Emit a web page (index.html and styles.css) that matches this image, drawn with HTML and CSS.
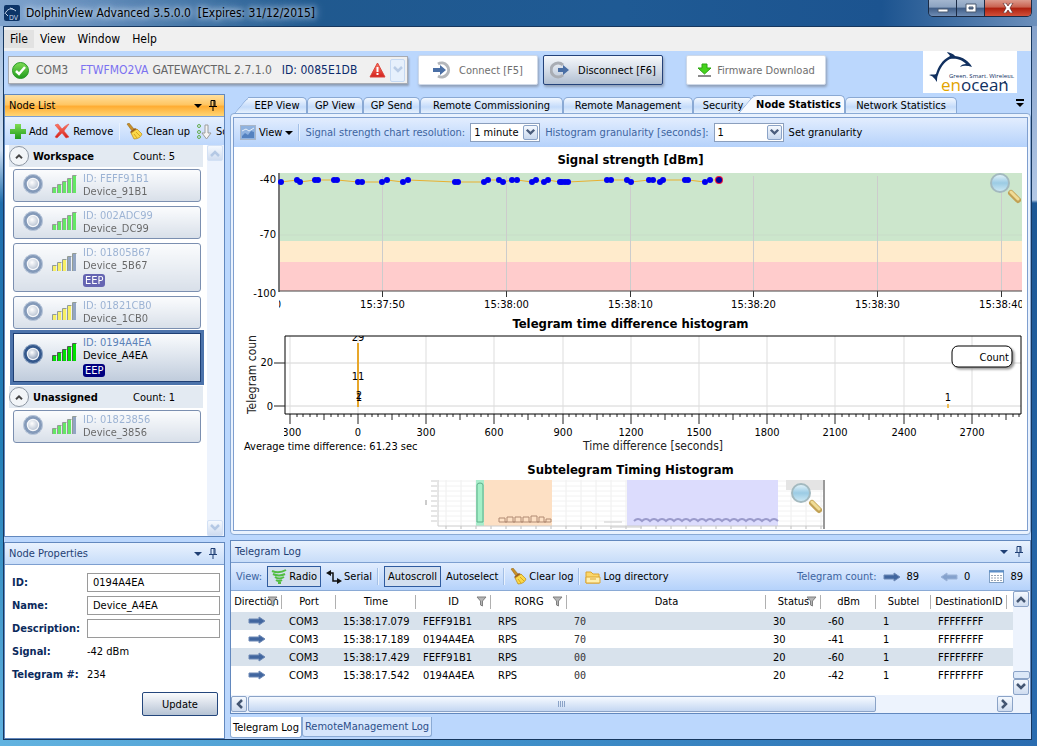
FILE: index.html
```html
<!DOCTYPE html>
<html lang="en">

<head>
    <meta charset="utf-8">
    <title>DolphinView Advanced</title>
    <link rel="stylesheet" href="styles.css">
</head>

<body>
    <!-- shared icons -->
    <svg class="defs" width="0" height="0">
        <defs>
            <linearGradient id="green" x1="0" y1="0" x2="0" y2="1"><stop offset="0" stop-color="#7fdc55"/><stop offset="1" stop-color="#1f9a1c"/></linearGradient>
            <linearGradient id="red" x1="0" y1="0" x2="0" y2="1"><stop offset="0" stop-color="#ff7a66"/><stop offset="1" stop-color="#d3201c"/></linearGradient>
            <linearGradient id="lens" x1="0" y1="0" x2="0" y2="1"><stop offset="0" stop-color="#e6f5fb"/><stop offset=".5" stop-color="#9bcbe4"/><stop offset="1" stop-color="#cfeaf5"/></linearGradient>
            <radialGradient id="ball" cx=".4" cy=".35" r=".7"><stop offset="0" stop-color="#fff"/><stop offset="1" stop-color="#8e9fb8"/></radialGradient>
        </defs>
        <symbol id="pin" viewBox="0 0 8 11"><path d="M2 .5h4v6H2zM5 1v5M0 6.500h8M4 7v4" fill="none" stroke="currentColor"/></symbol>
        <symbol id="arrow" viewBox="0 0 18 10"><path d="M1 3h10V1l6 4-6 4V7H1z" fill="#41669f" stroke="#6d88b5"/></symbol>
        <symbol id="chevron" viewBox="0 0 10 8"><path d="M1 1l4 4 4-4" fill="none" stroke="currentColor" stroke-width="2.500"/></symbol>
        <symbol id="funnel" viewBox="0 0 11 11"><path d="M1 1h9L6.500 5v5l-2-1V5z" fill="#b5b5b5" stroke="#808080"/></symbol>
        <symbol id="broom" viewBox="0 0 17 17"><path d="M1 1l2-1 5 6-2 2z" fill="#c98f28" stroke="#8a6213" stroke-width=".5"/><path d="M4 9l5-4 3 2-5 5z" fill="#9a5a1c"/><path d="M5 10l6-4 5 5c-1 3-4 5-8 5z" fill="#fbd84a" stroke="#b98a17" stroke-width=".7"/><path d="M8 11l3 4M10 9l4 4" stroke="#d7a71f"/></symbol>
        <symbol id="ring" viewBox="0 0 22 22"><circle cx="11" cy="11" r="8" fill="#f2f5f9" stroke="#34588c" stroke-width="3.500"/><circle cx="11" cy="11" r="9.500" fill="none" stroke="#8fa6c6"/><circle cx="11" cy="11" r="5" fill="url(#ball)"/></symbol>
        <symbol id="magnifier" viewBox="0 0 32 32"><path d="M20 20l4 4" stroke="#8d9aa5" stroke-width="3"/><path d="M22 21l7 7" stroke="#c2a255" stroke-width="6" stroke-linecap="round"/><path d="M22 20l7 7" stroke="#f0dc96" stroke-width="3" stroke-linecap="round"/><circle cx="11" cy="11" r="9" fill="url(#lens)" stroke="#a3b9bf" stroke-width="2"/></symbol>
    </svg>

    <header class="titlebar">
        <svg class="app-icon" width="16" height="16" viewBox="0 0 16 16"><rect width="16" height="16" rx="2" fill="#0d3467"/><path d="M1 9c2-5 6-7 11-3M2 9l2 2M6 3l3 1" fill="none" stroke="#c7d8ec"/><text x="5" y="15" class="icon-text">DV</text></svg>
        <h1>DolphinView Advanced 3.5.0.0&nbsp; [Expires: 31/12/2015]</h1>
        <div class="window-buttons">
            <button type="button" aria-label="Minimize"><svg width="12" height="10" viewBox="0 0 12 10"><path d="M1 6h10v3H1z" fill="#fff" stroke="#4a5a70"/></svg></button>
            <button type="button" aria-label="Maximize"><svg width="12" height="10" viewBox="0 0 12 10"><path d="M1 1h10v8H1zM4 4h4v2H4z" fill="#fff" fill-rule="evenodd" stroke="#4a5a70"/></svg></button>
            <button type="button" class="close" aria-label="Close"><svg width="12" height="10" viewBox="0 0 12 10"><path d="M1 0h3l2 3 2-3h3L8 5l3 5H8L6 7l-2 3H1l3-5z" fill="#fff" stroke="#5c2a2a" stroke-width=".7"/></svg></button>
        </div>
    </header>

    <div class="window">
        <nav class="menu">
            <a href="#" class="current">File</a>
            <a href="#">View</a>
            <a href="#">Window</a>
            <a href="#">Help</a>
        </nav>

        <div class="toolbar">
            <div class="gateway">
                <svg width="17" height="17" viewBox="0 0 17 17"><circle cx="8.500" cy="8.500" r="8" fill="url(#green)" stroke="#2b9a2a"/><path d="M4 9l3 3 6-7" fill="none" stroke="#fff" stroke-width="2.500"/></svg>
                <span class="port">COM3</span>
                <span class="serial">FTWFMO2VA</span>
                <span>GATEWAYCTRL 2.7.1.0</span>
                <span class="gateway-id">ID: 0085E1DB</span>
                <svg class="warning" width="17" height="16" viewBox="0 0 17 16"><path d="M8.500 1L16 15H1z" fill="url(#red)" stroke="#d9433a" stroke-linejoin="round"/><path d="M8.500 5v5M8.500 11v2" stroke="#fff" stroke-width="2"/></svg>
                <button type="button" class="gateway-drop" aria-label="Select gateway"><svg width="10" height="8"><use href="#chevron"/></svg></button>
            </div>
            <button type="button" class="tool-button connect" disabled>
                <svg width="18" height="18" viewBox="0 0 18 18"><path d="M5 3a7 7 0 1 1 0 12" fill="none" stroke="#b4b7bb" stroke-width="3"/><path d="M0 7h7V4l6 5-6 5v-3H0z" fill="#4a6fa5"/></svg>
                Connect [F5]
            </button>
            <button type="button" class="tool-button disconnect">
                <svg width="20" height="18" viewBox="0 0 20 18"><path d="M13 4a7 7 0 1 0 0 10" fill="none" stroke="#a9adb4" stroke-width="3"/><path d="M8 7h5V4l6 5-6 5v-3H8z" fill="#4a6fa5"/></svg>
                Disconnect [F6]
            </button>
            <button type="button" class="tool-button firmware" disabled>
                <svg width="15" height="14" viewBox="0 0 15 14"><path d="M5 1h5v4h4l-6.500 6L1 5h4z" fill="#45d31b" stroke="#2ca512"/><path d="M1 13h13" stroke="#8b8b8b" stroke-width="2"/></svg>
                Firmware Download
            </button>
            <svg class="logo" width="94" height="42" viewBox="0 0 94 42" role="img" aria-label="enocean">
                <rect width="94" height="42" fill="#fff"/>
                <path d="M24 1c4 1 7 2 8 4 8 1 14 5 17 11-4-1-8-2-12 0 1-2 3-3 6-3-4-5-11-6-16-5-6 3-10 9-12 16-1 2-1 4-1 7-3-4-4-6-8-7 3-1 5 0 7-1 2-7 6-14 14-18-1-2-2-2-3-4z" fill="#11305f"/>
                <text x="26" y="27" class="logo-line">Green. Smart. Wireless.</text>
                <text x="18" y="40" class="logo-name"><tspan fill="#e2a400">en</tspan>ocean</text>
                <circle cx="82" cy="31" r="1" fill="#11305f"/>
            </svg>
        </div>

        <div class="workarea">
            <aside class="side">
                <section class="panel node-list">
                    <div class="panel-title active">
                        <h2>Node List</h2>
                        <i class="caret"></i>
                        <svg width="8" height="11"><use href="#pin"/></svg>
                    </div>
                    <div class="node-tools">
                        <button type="button"><svg width="16" height="16" viewBox="0 0 16 16"><path d="M5 1h6v5h5v5h-5v5H5v-5H0V6h5z" fill="url(#green)"/></svg>Add</button>
                        <button type="button"><svg width="16" height="16" viewBox="0 0 16 16"><path d="M1 2l3-1 4 5c2-2 4-4 7-5-2 3-4 5-5 7l5 6-3 1-4-5-5 5-2-1c2-3 4-5 5-6z" fill="url(#red)" stroke="#e2463c" stroke-width=".5"/></svg>Remove</button>
                        <i class="separator"></i>
                        <button type="button"><svg width="17" height="17"><use href="#broom"/></svg>Clean up</button>
                        <button type="button"><svg width="17" height="17" viewBox="0 0 17 17"><g fill="none" stroke="#62ac4c"><circle cx="3" cy="3" r="1.500"/><circle cx="3" cy="9" r="1.500"/><circle cx="3" cy="14" r="1.500"/></g><path d="M9 2h3v8h3l-4.500 6L6 10h3z" fill="#f4f4f4" stroke="#9c9c9c"/></svg>Sort</button>
                    </div>
                    <div class="node-scroll">
                        <div class="nodes" id="nodes"></div>
                        <div class="vscroll faded">
                            <button type="button" aria-label="Scroll up"><svg class="up" width="10" height="8"><use href="#chevron"/></svg></button>
                            <button type="button" aria-label="Scroll down"><svg width="10" height="8"><use href="#chevron"/></svg></button>
                        </div>
                    </div>
                </section>

                <section class="panel node-properties">
                    <div class="panel-title">
                        <h2>Node Properties</h2>
                        <i class="caret"></i>
                        <svg width="8" height="11"><use href="#pin"/></svg>
                    </div>
                    <form class="properties">
                        <label for="nodeId">ID:</label>
                        <input type="text" id="nodeId" value="0194A4EA">
                        <label for="nodeName">Name:</label>
                        <input type="text" id="nodeName" value="Device_A4EA">
                        <label for="nodeDescription">Description:</label>
                        <input type="text" id="nodeDescription">
                        <b>Signal:</b>
                        <span>-42 dBm</span>
                        <b>Telegram #:</b>
                        <span>234</span>
                        <button type="button" class="update">Update</button>
                    </form>
                </section>
            </aside>

            <main class="content">
                <nav class="tabs">
                    <button type="button" class="tab-eep slanted">EEP View</button>
                    <button type="button" class="tab-gp">GP View</button>
                    <button type="button" class="tab-send">GP Send</button>
                    <button type="button" class="tab-commissioning">Remote Commissioning</button>
                    <button type="button" class="tab-management">Remote Management</button>
                    <button type="button" class="tab-security">Security</button>
                    <button type="button" class="tab-node slanted selected">Node Statistics</button>
                    <button type="button" class="tab-network">Network Statistics</button>
                    <svg class="tab-list" width="8" height="8" viewBox="0 0 8 8"><path d="M0 0h8v2H0zM0 4h8L4 8z"/></svg>
                </nav>

                <section class="statistics">
                    <div class="statistics-inner">
                        <div class="bar chart-bar">
                            <button type="button" class="view-menu"><svg width="16" height="15" viewBox="0 0 16 15"><rect x=".5" y=".5" width="15" height="14" fill="#8fb2df" stroke="#a9b6c8"/><path d="M2 11l3-3 3 2 3-4 3 1v6H2z" fill="#5482c0"/><path d="M2 6l4-2 3 2 5-3" fill="none" stroke="#e8f0fa"/></svg>View<i class="caret"></i></button>
                            <i class="separator"></i>
                            <label for="resolution">Signal strength chart resolution:</label>
                            <span class="combo">
                                <select id="resolution"><option>1 minute</option><option>5 minutes</option></select>
                                <svg width="14" height="14" viewBox="-2 -3 14 14"><use href="#chevron" width="10" height="8"/></svg>
                            </span>
                            <label for="granularity">Histogram granularity [seconds]:</label>
                            <span class="combo">
                                <select id="granularity"><option>1</option><option>10</option></select>
                                <svg width="14" height="14" viewBox="-2 -3 14 14"><use href="#chevron" width="10" height="8"/></svg>
                            </span>
                            <button type="button">Set granularity</button>
                        </div>
                        <div class="charts">
                            <h3>Signal strength [dBm]</h3>
                            <svg class="chart" viewBox="0 0 793 144">
                                <clipPath id="signalClip"><path d="M45 122h743v22H45z"/></clipPath>
                                <rect x="45" y="3" width="743" height="68" fill="#cce6cc"/>
                                <rect x="45" y="71" width="743" height="21" fill="#ffebcc"/>
                                <rect x="45" y="92" width="743" height="29" fill="#ffcccc"/>
                                <path d="M46 65h742" stroke="#c8dcc8"/>
                                <g id="signalGrid"></g>
                                <path d="M45 3v119" stroke="#777" stroke-width="2"/>
                                <path d="M45 121h743" stroke="#444" stroke-width="1"/>
                                <g class="scale" text-anchor="end"><text x="42" y="13">-40</text><text x="42" y="68">-70</text><text x="42" y="127">-100</text></g>
                                <g clip-path="url(#signalClip)">
                                    <g id="signalLabels" class="scale" text-anchor="middle"><text x="44" y="138">0</text></g>
                                </g>
                                <g id="signalPoints"></g>
                                <use href="#magnifier" x="755" y="2" width="32" height="32"/>
                            </svg>
                            <h3>Telegram time difference histogram</h3>
                            <svg class="chart" viewBox="0 0 793 122">
                                <clipPath id="plotClip"><path d="M50 2h737v78H50z"/></clipPath>
                                <clipPath id="labelClip"><path d="M50 80h743v42H50z"/></clipPath>
                                <clipPath id="axisClip"><path d="M0 2h30v78H0z"/></clipPath>
                                <path d="M51 29h736M51 72h736" stroke="#d4d4d4"/>
                                <g id="histogramGrid"></g>
                                <g clip-path="url(#labelClip)">
                                    <g id="histogramLabels" class="label" text-anchor="middle"></g>
                                </g>
                                <g clip-path="url(#plotClip)">
                                    <path d="M124 9v64" stroke="#e8a72a" stroke-width="2"/>
                                    <path d="M714 70v4" stroke="#f0bd52" stroke-width="2"/>
                                    <g class="scale" text-anchor="middle"><text x="124" y="7">29</text><text x="124" y="46">11</text><text x="125" y="65">2</text><text x="125" y="67">1</text><text x="714" y="67">1</text></g>
                                </g>
                                <path d="M51 2h736v78H51z" fill="none" stroke="#000"/>
                                <path d="M40 29h11M40 72h11" stroke="#222"/>
                                <g class="label" text-anchor="end"><text x="39" y="32">20</text><text x="39" y="76">0</text></g>
                                <g clip-path="url(#axisClip)"><text class="axis" transform="translate(22 80) rotate(-90)">Telegram count</text></g>
                                <rect class="legend" x="718" y="12" width="60" height="21" rx="6"/>
                                <text class="label" x="775" y="27" text-anchor="end">Count</text>
                                <text class="label" x="10" y="116">Average time difference: 61.23 sec</text>
                                <text class="axis" x="419" y="116" text-anchor="middle">Time difference [seconds]</text>
                            </svg>
                            <h3 class="subtelegram">Subtelegram Timing Histogram</h3>
                            <svg class="chart" viewBox="0 0 793 50">
                                <g id="previewGrid"></g>
                                <rect x="242" y="0" width="8" height="46" fill="#a9edcb"/>
                                <path d="M243 42V5q0-2 3-2t3 2v37z" fill="#a4f0c8" stroke="#5fae89"/>
                                <rect x="250" y="0" width="68" height="46" fill="#fde0c4"/>
                                <rect x="393" y="0" width="151" height="46" fill="#dcdcfd"/>
                                <path d="M265 42v-4h6v4h2v-5h6v5h2v-5h6v5h2v-5h6v5h2v-6h6v6h2v-5h5v5h2v-3h5v3z" fill="none" stroke="#b08a72"/>
                                <path id="previewWave" fill="none" stroke="#9a9acb" stroke-width="2"/>
                                <path d="M204 0v46h386M370 42h18M378 47h30" fill="none" stroke="#ccc"/>
                                <path d="M192 20v5" stroke="#999"/>
                                <path d="M552 0h38v10h-38z" fill="#e4e4e4"/>
                                <path d="M590 0v49" stroke="#999" stroke-width="2"/>
                                <use href="#magnifier" x="556" y="2" width="32" height="32"/>
                            </svg>
                        </div>
                    </div>
                </section>

                <section class="panel log">
                    <div class="panel-title">
                        <h2>Telegram Log</h2>
                        <i class="caret"></i>
                        <svg width="8" height="11"><use href="#pin"/></svg>
                    </div>
                    <div class="bar log-bar">
                        <span class="hint">View:</span>
                        <button type="button" class="pressed"><svg width="16" height="16" viewBox="0 0 16 16"><path d="M1 2q7 3 14-1M2 5q6 3 12 0M4 8q4 3 9 0M5 11q3 2 6 0M7 14h3" fill="none" stroke="#52bd42" stroke-width="2"/></svg>Radio</button>
                        <button type="button"><svg width="16" height="16" viewBox="0 0 16 16"><path d="M2 4h5v8h6" fill="none" stroke="#111" stroke-width="1.500"/><path d="M5 1v6L0 4zM11 9v6l5-3z" fill="#111"/></svg>Serial</button>
                        <i class="separator"></i>
                        <button type="button" class="pressed">Autoscroll</button>
                        <button type="button">Autoselect</button>
                        <i class="separator"></i>
                        <button type="button"><svg width="17" height="17"><use href="#broom"/></svg>Clear log</button>
                        <i class="separator"></i>
                        <button type="button"><svg width="16" height="14" viewBox="0 0 16 14"><path d="M1 12V2h5l2 2h6v9H1z" fill="#fbd669" stroke="#dba431"/><path d="M1 7h14v6H1z" fill="#ffefae" stroke="#dba431"/><path d="M5 9h6" stroke="#dba431"/></svg>Log directory</button>
                        <span class="counts">
                            <span class="hint">Telegram count:</span>
                            <svg width="18" height="10"><use href="#arrow"/></svg><span>89</span>
                            <svg class="sent" width="18" height="10"><use href="#arrow"/></svg><span>0</span>
                            <svg class="total" width="15" height="13" viewBox="0 0 15 13"><rect x=".5" y=".5" width="14" height="12" fill="#fff" stroke="#7f9fc4"/><path d="M0 1.500h15" stroke="#5d8fc8" stroke-width="2"/><path d="M2 5.500h11M2 8h11M2 10.500h11" stroke="#98a4b4" stroke-dasharray="2 1"/></svg><span>89</span>
                        </span>
                    </div>
                    <div class="log-body">
                        <div class="log-view">
                            <table>
                                <thead>
                                    <tr>
                                        <th class="c-direction">Direction<svg width="11" height="11"><use href="#funnel"/></svg></th>
                                        <th class="c-port">Port</th>
                                        <th class="c-time">Time</th>
                                        <th class="c-id">ID<svg width="11" height="11"><use href="#funnel"/></svg></th>
                                        <th class="c-rorg">RORG<svg width="11" height="11"><use href="#funnel"/></svg></th>
                                        <th>Data</th>
                                        <th class="c-status">Status<svg width="11" height="11"><use href="#funnel"/></svg></th>
                                        <th class="c-dbm">dBm</th>
                                        <th class="c-subtel">Subtel</th>
                                        <th class="c-destination">DestinationID</th>
                                        <th class="c-end"></th>
                                    </tr>
                                </thead>
                                <tbody id="telegrams"></tbody>
                            </table>
                            <div class="hscroll">
                                <button type="button" aria-label="Scroll left"><svg class="left" width="10" height="8"><use href="#chevron"/></svg></button>
                                <div class="track"><div class="thumb"><i></i></div></div>
                                <button type="button" aria-label="Scroll right"><svg class="right" width="10" height="8"><use href="#chevron"/></svg></button>
                            </div>
                        </div>
                        <div class="vscroll">
                            <button type="button" aria-label="Scroll up"><svg class="up" width="10" height="8"><use href="#chevron"/></svg></button>
                            <div class="thumb"></div>
                            <button type="button" aria-label="Scroll down"><svg width="10" height="8"><use href="#chevron"/></svg></button>
                        </div>
                    </div>
                </section>
                <nav class="log-tabs">
                    <button type="button" class="selected">Telegram Log</button>
                    <button type="button">RemoteManagement Log</button>
                </nav>
            </main>
        </div>
    </div>

    <script src="script.js"></script>
</body>

</html>
```
FILE: styles.css
```css
* {
    box-sizing: border-box;
}

body {
    margin: 0;
    min-height: 100vh;
    display: flex;
    flex-direction: column;
    padding: 0 5px 7px 3px;
    font-family: "DejaVu Sans Condensed", "DejaVu Sans", Tahoma, sans-serif;
    font-stretch: condensed;
    font-size: 11px;
    line-height: 13px;
    color: #000;
    background: linear-gradient(90deg, #7fa3cd, #20598f 30%, #1f5a94 60%, #1c5490 85%, #6c8fbb) 0 0 / 100% 26px no-repeat,
        linear-gradient(90deg, #62b3e0, #3f8fc9 50%, #2a6cb0) 0 100% / 100% 7px no-repeat,
        linear-gradient(#9cb9dc, #cfdff2 150px, #1f6fae 203px, #2380b8 60%, #62b3e0) 0 0 / 4px 100% no-repeat,
        linear-gradient(#7f9cc6, #b3c8e6 200px, #1c5795 203px, #2a6cb0) 100% 0 / 5px 100% no-repeat,
        #1c5490;
}

h1, h2, h3 {
    margin: 0;
    font-weight: normal;
}

button, input, select {
    font: inherit;
    color: inherit;
}

button {
    border: 0;
    padding: 0;
    background: none;
}

svg {
    flex: none;
}

.defs {
    position: absolute;
}

/* title bar */
.titlebar {
    display: flex;
    align-items: center;
    height: 26px;
}

.app-icon {
    margin-left: 1px;
}

.titlebar h1 {
    flex: 1;
    margin-left: 6px;
    font-size: 12px;
    text-shadow: 0 0 5px #dce8f6, 0 0 8px #c6d9ee, 0 0 12px #b4cce8;
}

.icon-text {
    font-size: 7px;
    fill: #c7d8ec;
}

.window-buttons {
    display: flex;
    align-self: flex-start;
    height: 17px;
    border: 1px solid #1b2b45;
    border-top: 0;
    border-radius: 0 0 5px 5px;
    overflow: hidden;
}

.window-buttons button {
    display: flex;
    align-items: center;
    justify-content: center;
    width: 28px;
    border-right: 1px solid #1b2b45;
    background: linear-gradient(#a3b6cf, #8ba2c0 45%, #3f5c85 50%, #6f8db5);
}

.window-buttons .close {
    width: 46px;
    border: 0;
    background: linear-gradient(#dc9a8c, #c9614e 45%, #ad1f0d 50%, #d1503a);
}

.window {
    flex: 1;
    display: flex;
    flex-direction: column;
    border: 1px solid #16375f;
    background: #bbd7fd;
}

/* menu */
.menu {
    display: flex;
    align-items: center;
    height: 24px;
    background: #f0f0f0;
    font-size: 12px;
}

.menu a {
    padding: 2px 6px;
    line-height: 14px;
    color: #000;
    text-decoration: none;
}

.menu .current {
    background: #e2e2e2;
}

/* main toolbar */
.toolbar {
    display: flex;
    align-items: flex-start;
    height: 43px;
    padding: 0 14px 0 4px;
}

.gateway {
    display: flex;
    align-items: center;
    width: 400px;
    height: 28px;
    margin: 5px 10px 0 0;
    padding: 0 2px 0 3px;
    border: 1px solid #a7abb3;
    background: #f0f0f0;
    box-shadow: 1px 2px 2px #8d9db5;
    font-size: 12px;
    color: #666;
    white-space: nowrap;
}

.gateway .port {
    margin: 0 12px 0 7px;
}

.gateway .serial {
    margin-right: 4px;
    color: #7b72f0;
}

.gateway-id {
    margin-left: 10px;
    color: #0b2a6b;
}

.warning {
    margin-left: auto;
}

.gateway-drop {
    width: 15px;
    height: 23px;
    margin-left: 4px;
    border: 1px solid #c5d9f3;
    border-radius: 2px;
    background: #e6f0fc;
    color: #b9cce6;
}

.tool-button {
    display: flex;
    align-items: center;
    justify-content: center;
    gap: 8px;
    width: 120px;
    height: 30px;
    margin-top: 4px;
    border-radius: 2px;
    background: #fff;
    box-shadow: 1px 2px 3px #8d9db5;
    white-space: nowrap;
}

.tool-button:disabled {
    border: 1px solid #cfd9e8;
    color: #6e6e6e;
}

.disconnect {
    margin-left: 5px;
    border: 1px solid #24427a;
    background: linear-gradient(#f6f8fb, #d5dde8 50%, #b0bed1);
}

.firmware {
    width: 140px;
    gap: 5px;
    margin-left: 23px;
}

.logo {
    margin-left: auto;
}

.logo-line,
.logo-name {
    font-family: "Open Sans", sans-serif;
    font-stretch: normal;
    font-size: 6px;
    fill: #11305f;
}

.logo-name {
    font-size: 17px;
}

.workarea {
    flex: 1;
    display: grid;
    grid-template-columns: 221px minmax(0, 1fr);
    gap: 5px;
}

/* panels */
.panel {
    border: 1px solid #6288be;
    background: #fff;
}

.panel-title {
    display: flex;
    align-items: center;
    gap: 7px;
    height: 22px;
    padding: 0 7px 0 4px;
    border-bottom: 1px solid #7d9fd0;
    background: linear-gradient(#e9f2fe, #c8ddf9);
    color: #1f3f74;
}

.panel-title h2 {
    flex: 1;
    font-size: 11px;
}

.panel-title.active {
    background: linear-gradient(#ffdf9c, #ffc765 45%, #ffad33 55%, #ffd573);
    color: #000;
}

.caret {
    border: 4px solid transparent;
    border-top-color: currentColor;
    border-bottom: 0;
}

.separator {
    width: 1px;
    height: 17px;
    background: #a3bfe6;
    border-right: 1px solid #e8f1fd;
    box-sizing: content-box;
}

/* left column */
.side {
    display: flex;
    flex-direction: column;
    gap: 5px;
    min-width: 0;
}

.node-list {
    flex: 1;
    display: flex;
    flex-direction: column;
}

.node-tools {
    display: flex;
    align-items: center;
    gap: 6px;
    height: 28px;
    padding-left: 5px;
    overflow: hidden;
    background: linear-gradient(#e6f0fe, #bdd7fc);
}

.node-tools button {
    display: flex;
    align-items: center;
    gap: 3px;
    white-space: nowrap;
}

.node-scroll {
    flex: 1;
    display: flex;
    justify-content: space-between;
}

.nodes {
    display: flex;
    flex-direction: column;
    gap: 4px;
    width: 194px;
    margin-left: 4px;
}

.group {
    display: flex;
    align-items: center;
    gap: 4px;
    height: 22px;
    margin-bottom: -2px;
    background: #e3eaf2;
}

.group button {
    display: flex;
    align-items: center;
    justify-content: center;
    width: 20px;
    height: 20px;
    border: 1px solid #8c96a3;
    border-radius: 50%;
    background: #f2f5f8;
    color: #444;
}

.group h3 {
    width: 96px;
    font-size: 11px;
    font-weight: bold;
}

.node {
    display: flex;
    align-items: flex-start;
    gap: 6px;
    height: 33px;
    margin: 0 2px 0 4px;
    padding: 2px 8px;
    border: 1px solid #24467c;
    border-radius: 3px;
    background: linear-gradient(#f9fbfd, #dde4ed 50%, #c0ccdc);
    opacity: 0.6;
}

.node .ring {
    margin-top: 1px;
}

.node .bars {
    margin: 3px 0 0 2px;
}

.node.tall {
    height: 49px;
}

.node.tall .ring,
.node.tall .bars {
    margin-top: 7px;
}

.node.selected {
    opacity: 1;
    outline: 3px solid #4c73ab;
    border-color: #1e3f74;
    border-radius: 0;
}

.node-id {
    display: block;
    color: #5c82b8;
}

.eep {
    display: inline-block;
    margin-top: 2px;
    padding: 0 2px;
    border-radius: 3px;
    background: #00007f;
    color: #fff;
}

.vscroll {
    display: flex;
    flex-direction: column;
    justify-content: space-between;
    width: 17px;
    background: #edf3fd;
}

.vscroll button,
.hscroll button {
    display: flex;
    align-items: center;
    justify-content: center;
    width: 16px;
    height: 16px;
    border: 1px solid #8ba3c7;
    border-radius: 2px;
    background: linear-gradient(#f5f9fe, #cfdcf0);
    color: #445672;
}

.faded button {
    border-color: #d3e1f5;
    color: #b4c8e4;
}

.up {
    transform: rotate(180deg);
}

.left {
    transform: rotate(90deg);
}

.right {
    transform: rotate(-90deg);
}

.node-properties {
    height: 197px;
}

.properties {
    display: grid;
    grid-template-columns: 71px 1fr;
    gap: 4px;
    align-items: center;
    padding: 8px 4px 0 7px;
}

.properties label,
.properties b {
    font-weight: bold;
    color: #0b2a5c;
    white-space: nowrap;
}

.properties input {
    width: 100%;
    height: 19px;
    padding: 0 5px;
    border: 1px solid #9a9a9a;
    background: #fff;
}

.properties b,
.properties span {
    height: 19px;
    line-height: 19px;
}

.update {
    grid-column: 2;
    justify-self: end;
    width: 76px;
    height: 24px;
    margin: 4px 2px 0 0;
    border: 1px solid #24467c;
    border-radius: 2px;
    background: linear-gradient(#fafbfd, #d8dfe9 50%, #b6c3d4);
}

/* tabs */
.content {
    display: flex;
    flex-direction: column;
    min-width: 0;
}

.tabs {
    position: relative;
    z-index: 1;
    display: flex;
    align-items: flex-end;
    height: 19px;
    padding-left: 18px;
}

.tabs button {
    position: relative;
    height: 16px;
    border: 1px solid #8aa9d4;
    border-bottom: 0;
    border-radius: 5px 5px 0 0;
    background: linear-gradient(#f3f8ff, #c4dbfa 60%, #e6f0fd);
    white-space: nowrap;
}

.tabs .slanted {
    border-left: 0;
    border-top-left-radius: 0;
}

.tabs .slanted::before {
    content: "";
    position: absolute;
    top: -1px;
    bottom: 0;
    left: -7px;
    width: 14px;
    border: 1px solid #8aa9d4;
    border-width: 1px 0 0 1px;
    border-top-left-radius: 5px;
    background: inherit;
    transform: skewX(-40deg);
    z-index: -1;
}

.tab-eep {
    width: 59px;
}

.tab-gp {
    width: 56px;
}

.tab-send {
    width: 57px;
}

.tab-commissioning {
    width: 143px;
}

.tab-management {
    width: 130px;
}

.tab-security {
    width: 60px;
}

.tab-node {
    width: 92px;
}

.tab-network {
    width: 112px;
}

.tabs .selected {
    height: 18px;
    z-index: 1;
    background: #f7faff;
    font-weight: bold;
}

.tab-list {
    margin: 0 7px 6px auto;
}

.statistics {
    flex: 1;
    margin-bottom: 5px;
    padding: 3px 2px;
    border: 1px solid #8aaad5;
    border-radius: 4px;
    background: #e9f2fe;
}

.statistics-inner {
    height: 100%;
    border: 1px solid #7f9fcf;
    background: #fff;
}

.bar {
    display: flex;
    align-items: center;
    height: 29px;
    white-space: nowrap;
    background: linear-gradient(#e2edfe, #b5d2fb);
}

.bar button {
    display: flex;
    align-items: center;
    gap: 2px;
}

.chart-bar {
    gap: 5px;
    padding-left: 6px;
    color: #3d64a0;
}

.chart-bar button {
    gap: 3px;
    color: #000;
}

.combo {
    position: relative;
    display: flex;
    color: #000;
}

.combo select {
    width: 70px;
    height: 19px;
    padding: 0 3px;
    border: 1px solid #8b9fbd;
    border-radius: 0;
    background: #fff;
    appearance: none;
}

.combo svg {
    position: absolute;
    top: 2px;
    right: 2px;
    width: 15px;
    height: 15px;
    border: 1px solid #8ba3c7;
    border-radius: 2px;
    background: linear-gradient(#f5f9fe, #c9d8ee);
    color: #4b5d7c;
    pointer-events: none;
}

/* charts */
.charts h3 {
    height: 20px;
    font-size: 13px;
    line-height: 20px;
    font-weight: bold;
    text-align: center;
}

.charts h3:first-child {
    height: 23px;
    line-height: 26px;
}

.charts .subtelegram {
    margin-top: 4px;
}

.chart {
    display: block;
    width: 100%;
}

.scale {
    font-family: "DejaVu Sans", sans-serif;
    font-stretch: normal;
    font-size: 10px;
}

.label {
    font-size: 11px;
}

.axis {
    font-size: 12px;
    fill: #222;
}

.legend {
    fill: #fff;
    stroke: #000;
    filter: drop-shadow(2px 2px 1px #999);
}

/* telegram log */
.log-bar {
    gap: 5px;
    height: 28px;
    padding-left: 5px;
    border-bottom: 1px solid #8aaad5;
}

.log-bar .pressed {
    height: 21px;
    padding: 0 3px;
    border: 1px solid #2f5b9f;
    background: #d3dfef;
}

.hint {
    color: #3d64a0;
}

.counts {
    display: flex;
    align-items: center;
    gap: 6px;
    margin: 0 7px 0 auto;
}

.sent {
    transform: rotate(180deg);
    margin-left: 15px;
    opacity: 0.5;
}

.total {
    margin-left: 13px;
}

.log-body {
    display: flex;
}

.log-view {
    flex: 1;
    min-width: 0;
}

.log table {
    width: 100%;
    table-layout: fixed;
    border-collapse: collapse;
}

.log th {
    position: relative;
    height: 21px;
    padding: 0;
    font-weight: normal;
    white-space: nowrap;
    background: linear-gradient(#b0b0b0, #b0b0b0) 100% 4px / 1px 14px no-repeat;
}

.log th svg {
    position: absolute;
    top: 5px;
    right: 4px;
}

.log th:last-child {
    background: none;
}

.log td {
    height: 18px;
    padding: 0 0 0 7px;
}

.log tbody tr:nth-child(odd) {
    background: #d8e2ec;
}

.log td svg {
    display: block;
    margin-left: 10px;
}

.log .data {
    font-family: "DejaVu Sans Mono", monospace;
    font-size: 10px;
    color: #333;
}

.c-direction {
    width: 51px;
}

.c-port {
    width: 54px;
}

.c-time {
    width: 80px;
}

.c-id {
    width: 75px;
}

.c-rorg,
.c-destination {
    width: 76px;
}

.c-status,
.c-dbm,
.c-subtel {
    width: 55px;
}

.c-end {
    width: 6px;
}

.hscroll {
    display: flex;
    align-items: center;
    height: 18px;
    margin-top: 11px;
    background: #edf3fd;
}

.track {
    flex: 1;
    padding: 0 1px;
}

.hscroll .thumb {
    display: flex;
    align-items: center;
    justify-content: center;
    width: 84%;
    height: 16px;
    border: 1px solid #8ba3c7;
    border-radius: 2px;
    background: linear-gradient(#f6faff, #c4d7f2);
}

.hscroll i {
    width: 8px;
    height: 6px;
    background: repeating-linear-gradient(90deg, #8ba3c7 0 1px, transparent 1px 2px);
}

.log .vscroll {
    padding-bottom: 18px;
}

.log .vscroll .thumb {
    height: 8px;
    margin-top: auto;
    border: 1px solid #8ba3c7;
    border-radius: 2px;
    background: #dce8f8;
}

.log-tabs {
    display: flex;
    align-items: flex-start;
    height: 25px;
    padding-top: 3px;
}

.log-tabs button {
    height: 20px;
    padding: 0 2px;
    border: 1px solid #8aaad5;
    border-top: 0;
    border-radius: 0 0 3px 3px;
    background: #d6e6fc;
    color: #2d4f8b;
}

.log-tabs .selected {
    height: 21px;
    background: #fff;
    color: #000;
}
```
FILE: script.js
```js
const svgNS = 'http://www.w3.org/2000/svg';

function draw(parent, name, attributes, text) {
    const el = document.createElementNS(svgNS, name);
    for (const key in attributes) el.setAttribute(key, attributes[key]);
    if (text) el.textContent = text;
    parent.appendChild(el);
}

// node list
const groups = [
    { name: 'Workspace', nodes: [
        { id: 'FEFF91B1', name: 'Device_91B1', level: 5, color: '#00d800' },
        { id: '002ADC99', name: 'Device_DC99', level: 5, color: '#00d800' },
        { id: '01805B67', name: 'Device_5B67', level: 3, color: '#f2e600', eep: true },
        { id: '01821CB0', name: 'Device_1CB0', level: 4, color: '#f2e600' },
        { id: '0194A4EA', name: 'Device_A4EA', level: 5, color: '#00e000', eep: true, selected: true }
    ] },
    { name: 'Unassigned', nodes: [
        { id: '01823856', name: 'Device_3856', level: 4, color: '#00d800' }
    ] }
];

function signalBars(node) {
    let bars = '';
    for (let i = 0; i < 5; i++) {
        const h = 5 + i * 3;
        const fill = i < node.level ? node.color : '#4b6b9c';
        bars += `<rect x="${i * 5 + 1}" y="${18 - h}" width="3" height="${h}" fill="${fill}"/>`;
        bars += `<path d="M${i * 5}.5 18V${17 - h}.5h4" fill="none" stroke="#4c5c50"/>`;
    }
    return `<svg class="bars" width="25" height="18">${bars}</svg>`;
}

document.getElementById('nodes').innerHTML = groups.map(group => `
    <div class="group">
        <button type="button" aria-label="Collapse"><svg class="up" width="8" height="6"><use href="#chevron"/></svg></button>
        <h3>${group.name}</h3>
        <span>Count: ${group.nodes.length}</span>
    </div>` + group.nodes.map(node => `
    <div class="node ${node.eep ? 'tall' : ''} ${node.selected ? 'selected' : ''}">
        <svg class="ring" width="22" height="22"><use href="#ring"/></svg>
        ${signalBars(node)}
        <div>
            <span class="node-id">ID: ${node.id}</span>
            <span>${node.name}</span>
            ${node.eep ? '<br><span class="eep">EEP</span>' : ''}
        </div>
    </div>`).join('')).join('');

// telegram log
const telegrams = [
    ['15:38:17.079', 'FEFF91B1', '70', '30', '-60'],
    ['15:38:17.189', '0194A4EA', '70', '30', '-41'],
    ['15:38:17.429', 'FEFF91B1', '00', '20', '-60'],
    ['15:38:17.542', '0194A4EA', '00', '20', '-42']
];

document.getElementById('telegrams').innerHTML = telegrams.map(t => `
    <tr>
        <td><svg width="18" height="10"><use href="#arrow"/></svg></td>
        <td>COM3</td><td>${t[0]}</td><td>${t[1]}</td><td>RPS</td>
        <td class="data">${t[2]}</td><td>${t[3]}</td><td>${t[4]}</td><td>1</td><td>FFFFFFFF</td><td></td>
    </tr>`).join('');

// signal strength chart
const signalGrid = document.getElementById('signalGrid');
const signalLabels = document.getElementById('signalLabels');
['15:37:50', '15:38:00', '15:38:10', '15:38:20', '15:38:30', '15:38:40'].forEach((time, i) => {
    const x = Math.round(148 + i * 123.8) + 0.5;
    draw(signalGrid, 'path', { d: `M${x} 6v115`, stroke: '#ccc' });
    draw(signalGrid, 'path', { d: `M${x} 121v6`, stroke: '#333' });
    draw(signalLabels, 'text', { x: x, y: 138 }, time);
});

const high = 10, low = 12;
const points = [[47, low], [63, high], [66, low], [81, high], [84, high], [100, high], [103, high], [124, low], [128, low],
    [148, low], [153, high], [169, low], [174, high], [221, low], [224, low], [250, low], [254, high], [265, high], [269, low],
    [278, high], [283, high], [298, low], [302, high], [310, low], [314, high], [326, low], [328, low], [331, low], [334, low],
    [373, high], [377, high], [393, high], [397, low], [415, high], [419, high], [426, low], [429, high], [451, high],
    [454, high], [471, low], [476, high], [485, high]];
const signalPoints = document.getElementById('signalPoints');
draw(signalPoints, 'polyline', { points: points.join(' '), fill: 'none', stroke: '#e8b030' });
points.forEach((p, i) => {
    const last = i === points.length - 1;
    if (last) draw(signalPoints, 'circle', { cx: p[0], cy: p[1], r: 4, fill: '#f0143c' });
    draw(signalPoints, 'circle', { cx: p[0], cy: p[1], r: 3, fill: last ? '#00009c' : '#0000f0' });
});

// time difference axis: a tick every 30 seconds, a label every 300
const histogramGrid = document.getElementById('histogramGrid');
const histogramLabels = document.getElementById('histogramLabels');
for (let s = -300; s <= 2910; s += 30) {
    const x = Math.round(124 + s * 0.2273);
    const major = s % 300 === 0;
    const length = major ? 10 : s % 150 === 0 ? 6 : 3;
    if (major) {
        draw(histogramGrid, 'path', { d: `M${x} 2v78`, stroke: '#ddd' });
        draw(histogramLabels, 'text', { x: x, y: 102 }, String(s));
    }
    draw(histogramGrid, 'path', { d: `M${x} 80v${length}`, stroke: '#222' });
}

// small preview chart
const previewGrid = document.getElementById('previewGrid');
for (let x = 212; x < 590; x += 15) {
    draw(previewGrid, 'path', { d: `M${x} 0v46`, stroke: '#eee' });
    draw(previewGrid, 'path', { d: `M${x} 46v3`, stroke: '#bbb' });
}
for (let y = 1; y < 46; y += 5) {
    draw(previewGrid, 'path', { d: `M204 ${y}h386`, stroke: '#f2f2f2' });
    draw(previewGrid, 'path', { d: `M197 ${y}h6`, stroke: '#ccc' });
}
let wave = 'M400 41';
for (let x = 400; x < 540; x += 8) wave += 'q4 -4 8 0';
document.getElementById('previewWave').setAttribute('d', wave);
```
